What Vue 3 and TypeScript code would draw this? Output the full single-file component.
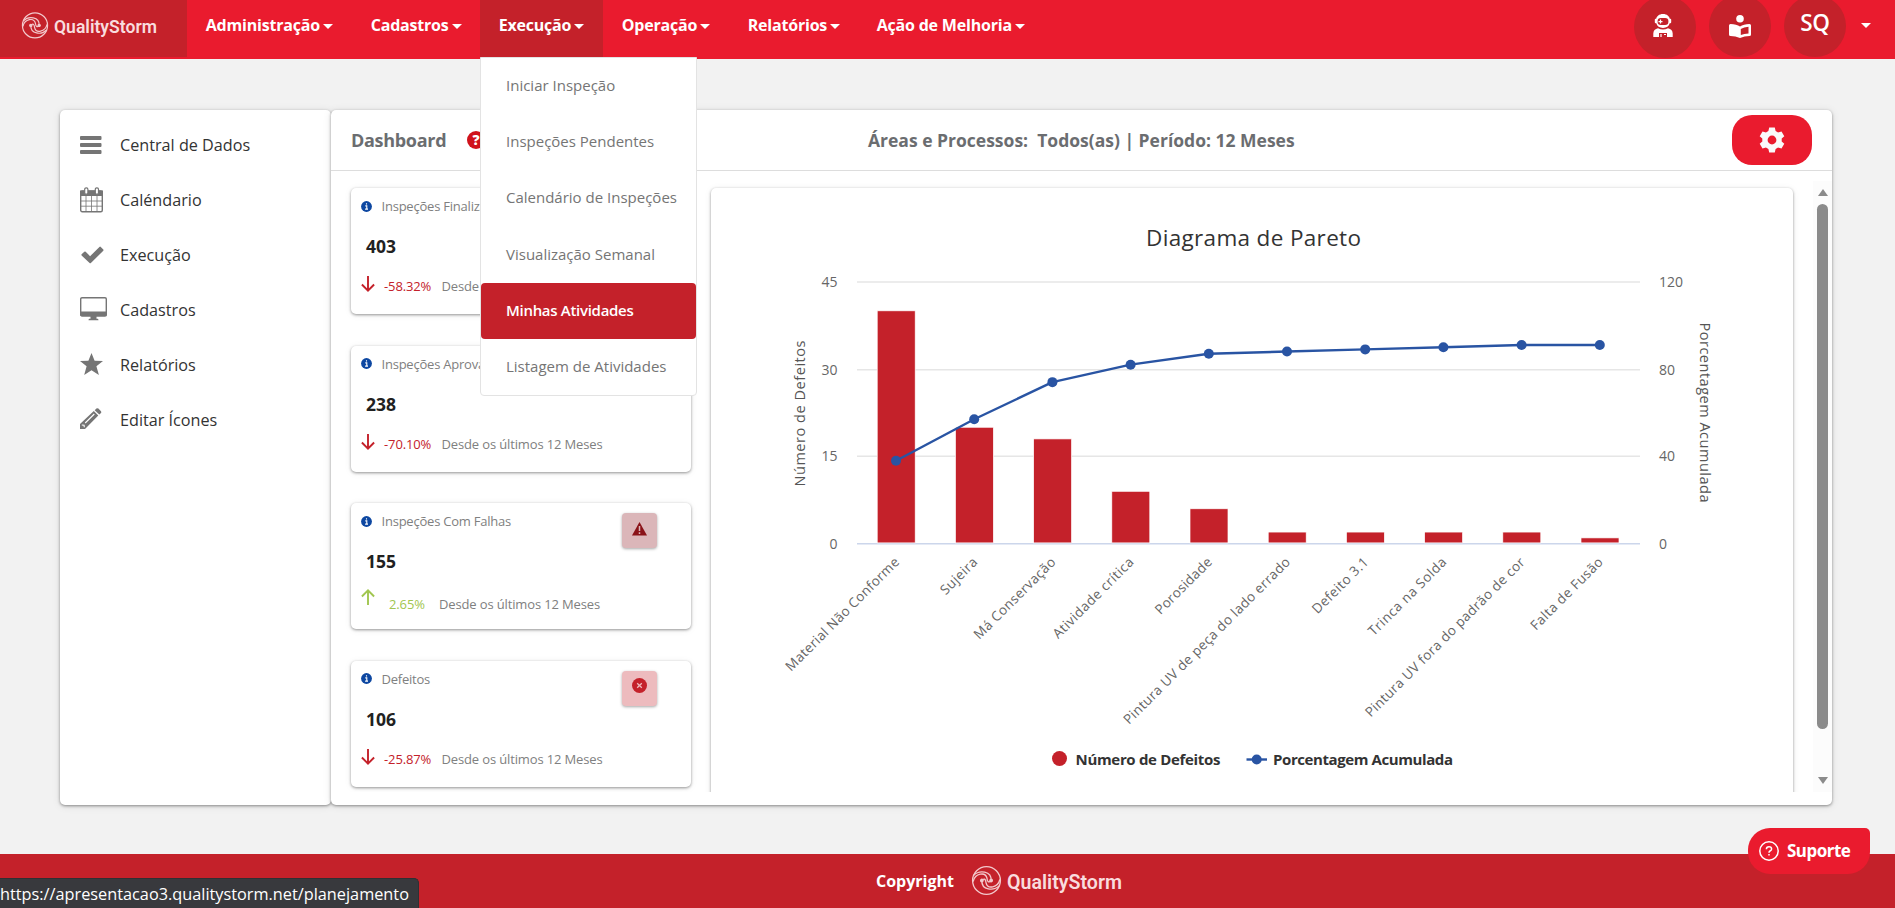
<script setup lang="ts">
interface NavItem { label: string; width: number; active?: boolean }
interface Kpi { title: string; value: string; change: string; up?: boolean; badge?: 'warn' | 'error' }
interface Defect { name: string; count: number; cumulative: number; labelLength: number }

const nav: NavItem[] = [
  { label: 'Administração', width: 165 },
  { label: 'Cadastros', width: 128 },
  { label: 'Execução', width: 123, active: true },
  { label: 'Operação', width: 126 },
  { label: 'Relatórios', width: 129 },
  { label: 'Ação de Melhoria', width: 186 },
]

const menu: string[] = [
  'Iniciar Inspeção',
  'Inspeções Pendentes',
  'Calendário de Inspeções',
  'Visualização Semanal',
  'Minhas Atividades',
  'Listagem de Atividades',
]
const activeMenu = 'Minhas Atividades'

const kpis: Kpi[] = [
  { title: 'Inspeções Finalizadas', value: '403', change: '-58.32%' },
  { title: 'Inspeções Aprovadas', value: '238', change: '-70.10%' },
  { title: 'Inspeções Com Falhas', value: '155', change: '2.65%', up: true, badge: 'warn' },
  { title: 'Defeitos', value: '106', change: '-25.87%', badge: 'error' },
]

const defects: Defect[] = [
  { name: 'Material Não Conforme', count: 40, cumulative: 38, labelLength: 154 },
  { name: 'Sujeira', count: 20, cumulative: 57, labelLength: 46 },
  { name: 'Má Conservação', count: 18, cumulative: 74, labelLength: 109 },
  { name: 'Atividade crítica', count: 9, cumulative: 82, labelLength: 108 },
  { name: 'Porosidade', count: 6, cumulative: 87, labelLength: 74 },
  { name: 'Pintura UV de peça do lado errado', count: 2, cumulative: 88, labelLength: 229 },
  { name: 'Defeito 3.1', count: 2, cumulative: 89, labelLength: 73 },
  { name: 'Trinca na Solda', count: 2, cumulative: 90, labelLength: 104 },
  { name: 'Pintura UV fora do padrão de cor', count: 2, cumulative: 91, labelLength: 219 },
  { name: 'Falta de Fusão', count: 1, cumulative: 91, labelLength: 96 },
]

const base = 543.7
const plotHeight = 262
const centerX = (i: number): number => 896 + i * 78.2
const barY = (v: number): number => base - (v / 45) * plotHeight
const lineY = (v: number): number => base - (v / 120) * plotHeight
const points = defects.map((d, i) => `${centerX(i)},${lineY(d.cumulative)}`).join(' ')
const ticks = [
  { left: '45', right: '120', y: 282 },
  { left: '30', right: '80', y: 369.8 },
  { left: '15', right: '40', y: 456.3 },
  { left: '0', right: '0', y: 543.7 },
]
</script>

<template>
  <div class="page">
    <header class="topbar">
      <div class="brand">
        <svg class="logo" width="142" height="32" viewBox="0 0 142 32">
          <g transform="translate(15 15.400) scale(.93)" fill="none" stroke="#f3c9cc" stroke-width="1.300">
            <circle r="13.500" />
            <path d="M-12.500-5C-7-10.500 5-9.500 4.500 0M12.500 5C7 10.500-5 9.500-4.500 0" />
            <path d="M-13 1C-11-7-1-9 .5-2 .8 1.500 2.500 2.500 4.500 0M13-1C11 7 1 9-.5 2-.8-1.500-2.500-2.500-4.500 0" />
            <circle cx="-4.500" r="1.200" fill="#f3c9cc" /><circle cx="4.500" r="1.200" fill="#f3c9cc" />
          </g>
          <text class="logo-text" x="34" y="23" textLength="103" lengthAdjust="spacingAndGlyphs">QualityStorm</text>
        </svg>
      </div>
      <nav class="nav">
        <a v-for="item in nav" :key="item.label" class="nav-item" :class="{ active: item.active }" :style="{ width: item.width + 'px' }">
          <span>{{ item.label }}</span><i class="caret"></i>
        </a>
      </nav>
      <div class="account">
        <span class="round low">
          <svg width="20" height="24" viewBox="0 0 20 24">
            <path fill="#fff" d="M10 0c4 0 6.300 2.300 6.800 4.800h.6q.8 0 .8.900v2.600q0 .9-.9.900h-.6C16 12 13.500 13.900 10 13.900S4 12 3.300 9.200h-.6q-.9 0-.9-.9V5.700q0-.9.8-.9h.6C3.700 2.300 6 0 10 0zM.3 23v-3.500Q.5 15 5 14.200q5 2.600 10 0 4.500.8 4.700 5.300V23z" />
            <rect x="4.600" y="4" width="10.800" height="7" rx="3.300" fill="#c4212a" />
            <path d="M7.500 5.600v4M5.500 7.600h4" stroke="#fff" stroke-width="1.200" />
            <path d="M6 23v-4h8v4" fill="#c4212a" /><path d="M8 20v3M11 20.500h2" stroke="#fff" stroke-width="1.200" />
          </svg>
        </span>
        <span class="round">
          <svg width="22" height="23" viewBox="0 0 22 23">
            <circle cx="11" cy="3.800" r="3.800" fill="#fff" />
            <path fill="#fff" d="M0 10.500Q0 9 1.500 9 7.500 9 11 11.500 14.500 9 20.500 9 22 9 22 10.500v9q0 1.500-1.500 1.600-5 .2-9.500 1.900-4.500-1.700-9.500-1.900Q0 21 0 19.500z" />
            <path fill="#c4212a" d="M11.800 14q3-2 7.700-2.200v6.600q-4.500.3-7.700 1.700z" />
          </svg>
        </span>
        <span class="round initials">SQ</span>
        <i class="caret"></i>
      </div>
    </header>

    <ul class="dropdown">
      <li v-for="entry in menu" :key="entry" :class="{ selected: entry === activeMenu }">{{ entry }}</li>
    </ul>

    <main class="content">
      <aside class="sidebar">
        <a class="side-item">
          <svg width="27" height="26" viewBox="0 0 27 26"><path fill="#757575" d="M1 4h19.500q1 0 1 1v2q0 1-1 1H1q-1 0-1-1V5q0-1 1-1zm0 7h19.500q1 0 1 1v2q0 1-1 1H1q-1 0-1-1v-2q0-1 1-1zm0 7h19.500q1 0 1 1v2q0 1-1 1H1q-1 0-1-1v-2q0-1 1-1z" /></svg>
          Central de Dados
        </a>
        <a class="side-item">
          <svg width="27" height="26" viewBox="0 0 27 26">
            <rect x=".7" y="4" width="21.600" height="20.800" rx="1.500" fill="#fff" stroke="#757575" stroke-width="1.400" />
            <path d="M0 3.500h23v5.500H0z" fill="#757575" />
            <path d="M6 9v16M11.500 9v16M17 9v16M1 14h21M1 19.200h21" stroke="#757575" stroke-width=".8" />
            <rect x="4.700" y=".8" width="3.200" height="6.400" rx="1.500" fill="#fff" stroke="#757575" stroke-width="1.200" />
            <rect x="15.300" y=".8" width="3.200" height="6.400" rx="1.500" fill="#fff" stroke="#757575" stroke-width="1.200" />
          </svg>
          Caléndario
        </a>
        <a class="side-item">
          <svg width="27" height="26" viewBox="0 0 27 26"><path fill="#757575" d="M1.600 12.200 4.300 9.800q.7-.6 1.400 0l4.400 4.400L19.400 4.900q.7-.6 1.400 0l2.500 2.600q.5.600 0 1.200L10.900 21q-.7.600-1.300 0L1.600 13.400q-.5-.6 0-1.200z" /></svg>
          Execução
        </a>
        <a class="side-item">
          <svg width="27" height="26" viewBox="0 0 27 26">
            <rect x=".7" y=".7" width="25.600" height="18.300" rx="1.300" fill="none" stroke="#757575" stroke-width="1.400" />
            <path d="M.5 14.500h26V19H.5zM10.500 18.500h6v3.200h1.200q.8.400.8 1.500h-10q0-1.100.8-1.500h1.200z" fill="#757575" />
          </svg>
          Cadastros
        </a>
        <a class="side-item">
          <svg width="27" height="26" viewBox="0 0 27 26"><path fill="#757575" d="m11.500 1 3.100 7.700 8.400.4-6.600 5.200 2.500 8.700-7.400-4.700L4.200 23l2.400-8.700L0 9.100l8.400-.4z" /></svg>
          Relatórios
        </a>
        <a class="side-item">
          <svg width="27" height="26" viewBox="0 0 27 26">
            <path fill="#757575" d="m14.700 3.200 1.700-1.600q1-.8 2 0l2.600 2.600q.7.900 0 1.800l-1.700 1.600zM13.800 4.100l4.500 4.500L6 21l-1 1H0v-5z" />
            <path d="M5.200 16 14.300 7M1.800 18l2.300.2.200 2.100" stroke="#fff" stroke-width="1.100" fill="none" />
          </svg>
          Editar Ícones
        </a>
      </aside>

      <section class="board">
        <div class="board-head">
          <h1>Dashboard</h1>
          <span class="help">?</span>
          <p class="filter">Áreas e Processos:&nbsp; Todos(as) | Período: 12 Meses</p>
          <button class="gear">
            <svg width="26" height="26" viewBox="0 0 26 26">
              <path fill="#fafafa" fill-rule="evenodd" d="M10.200.5h5.600l.8 3.500 2.500 1.400 3.400-1 2.800 4.800-2.600 2.400v2.800l2.600 2.400-2.800 4.800-3.400-1-2.500 1.400-.8 3.500h-5.600L9.400 22l-2.500-1.400-3.400 1L.7 16.800l2.600-2.400v-2.800L.7 9.200l2.800-4.800 3.400 1L9.400 4zM13 8.600a4.400 4.400 0 1 0 0 8.800 4.400 4.400 0 0 0 0-8.800z" />
            </svg>
          </button>
        </div>

        <div class="board-body">
          <div class="kpis">
            <article v-for="kpi in kpis" :key="kpi.title" class="kpi">
              <div class="kpi-title">
                <svg width="11" height="11" viewBox="0 0 11 11"><circle cx="5.500" cy="5.500" r="5.400" fill="#0d47a1" /><path d="M4.300 4.900h1.500V8M4.100 8.100h2.900M5.500 2.300v1.300" stroke="#fff" stroke-width="1.100" fill="none" /></svg>
                <span>{{ kpi.title }}</span>
              </div>
              <div class="kpi-value">{{ kpi.value }}</div>
              <div class="kpi-trend" :class="{ up: kpi.up }">
                <svg width="14" height="16" viewBox="0 0 14 16"><path d="M7 0v14.500M.9 8.500 7 14.600l6.100-6.100" fill="none" stroke="currentColor" stroke-width="1.900" /></svg>
                <span class="pct">{{ kpi.change }}</span>
                <span class="since">Desde os últimos 12 Meses</span>
              </div>
              <span v-if="kpi.badge" class="badge" :class="kpi.badge">
                <svg v-if="kpi.badge === 'warn'" width="15" height="14" viewBox="0 0 15 14"><path d="M7.500 0 15 13.500H0z" fill="#8a1218" /><path d="M7.500 4v5M7.500 10.300v1.700" stroke="#dbb6b9" stroke-width="1.500" /></svg>
                <svg v-else width="15" height="15" viewBox="0 0 15 15"><circle cx="7.500" cy="7.500" r="7.500" fill="#c4212a" /><path d="m5.200 5.200 4.600 4.600m0-4.600L5.200 9.800" stroke="#edbbbe" stroke-width="1.300" /></svg>
              </span>
            </article>
          </div>

          <div class="chart-card">
            <svg class="chart" width="1082" height="605" viewBox="711 188 1082 605">
              <text class="chart-title" x="1146" y="245.500" textLength="215">Diagrama de Pareto</text>
              <g v-for="t in ticks" :key="t.y">
                <line x1="857" x2="1640" :y1="t.y" :y2="t.y" :stroke="t.left === '0' ? '#ccd6eb' : '#e6e6e6'" stroke-width="1.500" />
                <text class="tick" x="837.500" :y="t.y + 5" text-anchor="end">{{ t.left }}</text>
                <text class="tick" x="1659" :y="t.y + 5">{{ t.right }}</text>
              </g>
              <rect v-for="(d, i) in defects" :key="'bar' + d.name" :x="centerX(i) - 18.8" :y="barY(d.count)" width="38" :height="base - barY(d.count) - 0.8" fill="#c4212a" stroke="#fff" stroke-width=".7" />
              <polyline :points="points" fill="none" stroke="#2954a3" stroke-width="2.400" stroke-linejoin="round" />
              <circle v-for="(d, i) in defects" :key="'dot' + d.name" :cx="centerX(i)" :cy="lineY(d.cumulative)" r="5" fill="#2954a3" />
              <text v-for="(d, i) in defects" :key="'label' + d.name" class="label" text-anchor="end" :textLength="d.labelLength" :transform="`translate(${centerX(i) + 4} 563) rotate(-45)`">{{ d.name }}</text>
              <text class="axis" transform="translate(804.500 486.500) rotate(-90)" textLength="146">Número de Defeitos</text>
              <text class="axis" transform="translate(1699.500 322.500) rotate(90)" textLength="180">Porcentagem Acumulada</text>
              <circle cx="1059.500" cy="758.500" r="7.500" fill="#c4212a" />
              <text class="legend" x="1075.500" y="764.500" textLength="145">Número de Defeitos</text>
              <line x1="1246.500" x2="1267" y1="759.500" y2="759.500" stroke="#2954a3" stroke-width="2.400" />
              <circle cx="1256.700" cy="759.500" r="5" fill="#2954a3" />
              <text class="legend" x="1273" y="764.500" textLength="180">Porcentagem Acumulada</text>
            </svg>
          </div>

          <div class="scrollbar">
            <i class="arrow-up"></i>
            <i class="thumb"></i>
            <i class="arrow-down"></i>
          </div>
        </div>
      </section>
    </main>

    <footer class="footer">
      <span>Copyright</span>
      <svg class="logo" width="156" height="38" viewBox="0 -2 156 38">
        <g transform="translate(15.500 16.500) scale(1.030)" fill="none" stroke="#f3c9cc" stroke-width="1.300">
          <circle r="13.500" />
          <path d="M-12.500-5C-7-10.500 5-9.500 4.500 0M12.500 5C7 10.500-5 9.500-4.500 0" />
          <path d="M-13 1C-11-7-1-9 .5-2 .8 1.500 2.500 2.500 4.500 0M13-1C11 7 1 9-.5 2-.8-1.500-2.500-2.500-4.500 0" />
          <circle cx="-4.500" r="1.200" fill="#f3c9cc" /><circle cx="4.500" r="1.200" fill="#f3c9cc" />
        </g>
        <text class="logo-text footer-logo" x="36" y="25" textLength="115" lengthAdjust="spacingAndGlyphs">QualityStorm</text>
      </svg>
    </footer>

    <button class="support">
      <svg width="20" height="20" viewBox="0 0 20 20">
        <circle cx="10" cy="10" r="9.200" fill="none" stroke="#fff" stroke-width="1.500" />
        <path d="M7.400 8.200Q7.400 5.700 10 5.700t2.600 2.200Q12.600 9.200 11 10q-1 .6-1 1.800M10 13v1.600" fill="none" stroke="#fff" stroke-width="1.500" />
      </svg>
      Suporte
    </button>

    <div class="status">https://apresentacao3.qualitystorm.net/planejamento</div>
  </div>
</template>

<style>
html,
body {
  margin: 0;
  overflow: hidden;
}
</style>

<style scoped>
.page {
  position: relative;
  display: flex;
  flex-direction: column;
  width: 1895px;
  height: 908px;
  overflow: hidden;
  background: #f2f2f2;
  font-family: "Open Sans", "Noto Sans", sans-serif;
}
.page * {
  box-sizing: border-box;
}
.topbar {
  display: flex;
  height: 59px;
  flex: none;
  background: #ea1b2e;
}
.brand {
  width: 187px;
  height: 57px;
  padding: 10px 0 0 20px;
  background: #c4212a;
}
.logo {
  overflow: visible;
}
.logo-text {
  font: 600 18.500px Roboto, sans-serif;
  fill: #f9dcde;
}
.footer-logo {
  font-size: 20.500px;
}
.nav {
  display: flex;
  height: 57px;
}
.nav-item {
  display: flex;
  align-items: center;
  gap: 3px;
  padding: 0 0 8px 18.700px;
  color: #fff;
  font-size: 16px;
  font-weight: 700;
  letter-spacing: -0.2px;
  white-space: nowrap;
}
.nav-item.active {
  background: #c4212a;
}
.caret {
  width: 0;
  border: 5px solid transparent;
  border-top-color: #fff;
  border-bottom: 0;
  margin-top: 3px;
}
.account {
  display: flex;
  gap: 13px;
  margin-left: auto;
  padding-right: 24px;
}
.account > .caret {
  margin: 23px 0 0 2px;
}
.round {
  display: flex;
  width: 62px;
  height: 62px;
  margin-top: -5px;
  align-items: center;
  justify-content: center;
  border-radius: 50%;
  background: #c4212a;
}
.round.low {
  margin-top: -4px;
  padding: 0 4px 2px 0;
}
.initials {
  padding-bottom: 7px;
  color: #fff;
  font-size: 22.500px;
  font-weight: 600;
  letter-spacing: -0.3px;
}
.dropdown {
  position: absolute;
  z-index: 5;
  top: 57px;
  left: 480px;
  width: 217px;
  height: 339px;
  margin: 0;
  padding: 0;
  border: 1px solid #e3e3e3;
  border-radius: 0 0 4px 4px;
  background: #fff;
  list-style: none;
}
.dropdown li {
  height: 56.200px;
  padding-left: 25px;
  border-radius: 4px;
  color: #757575;
  font-size: 15px;
  line-height: 54px;
  white-space: nowrap;
}
.dropdown li.selected {
  background: #c4212a;
  color: #fff;
  font-weight: 600;
  letter-spacing: -0.3px;
}
.content {
  display: flex;
  padding: 51px 63px 0 60px;
}
.sidebar,
.board {
  height: 694.500px;
  border-radius: 5px;
  background: #fff;
  box-shadow: 0 1px 3px rgba(0, 0, 0, 0.4), 0 1px 9px rgba(0, 0, 0, 0.1);
}
.sidebar {
  width: 270.500px;
  margin-right: 0.500px;
  padding: 7px 0 0 20px;
}
.side-item {
  display: flex;
  height: 55px;
  align-items: center;
  gap: 13px;
  color: #333;
  font-size: 16.200px;
}
.board {
  flex: 1;
}
.board-head {
  display: flex;
  height: 61px;
  align-items: center;
  padding: 0 20px;
  border-bottom: 1px solid #ddd;
  color: #6b6d70;
}
h1,
p {
  margin: 0;
  font-size: 18px;
  font-weight: 700;
}
h1 {
  width: 116px;
  letter-spacing: -0.3px;
}
.help {
  width: 18px;
  height: 18px;
  border-radius: 50%;
  background: #d0121b;
  color: #fff;
  font-size: 14px;
  font-weight: 800;
  line-height: 18px;
  text-align: center;
}
.filter {
  width: 430px;
  margin-left: 383px;
  font-size: 17.500px;
  white-space: nowrap;
}
.gear {
  display: flex;
  width: 80px;
  height: 50px;
  align-items: center;
  justify-content: center;
  margin-left: auto;
  padding: 0;
  border: 0;
  border-radius: 20px;
  background: #ea1b2e;
}
.board-body {
  display: flex;
  height: 621px;
  overflow: hidden;
  padding: 17px 0 0 20px;
}
.kpis {
  display: flex;
  width: 340px;
  flex-direction: column;
  gap: 31.500px;
}
.kpi,
.chart-card {
  border-radius: 5px;
  background: #fff;
  box-shadow: 0 1px 3px rgba(0, 0, 0, 0.4), 0 1px 9px rgba(0, 0, 0, 0.06);
}
.kpi {
  position: relative;
  height: 126px;
  flex: none;
  padding: 8px 0 0 10px;
}
.kpi-title {
  display: flex;
  height: 20px;
  align-items: center;
  gap: 9.500px;
  color: #808080;
  font-size: 13px;
  letter-spacing: -0.220px;
}
.kpi-value {
  height: 60px;
  padding-left: 5px;
  color: #212121;
  font-size: 17.500px;
  font-weight: 700;
  line-height: 60px;
}
.kpi-trend {
  display: flex;
  color: #c4212a;
  font-size: 13px;
  line-height: 20px;
}
.pct {
  width: 57.500px;
  margin-left: 9px;
  letter-spacing: -0.120px;
}
.since {
  color: #808080;
  letter-spacing: -0.140px;
}
.kpi-trend.up {
  margin-top: -2px;
  color: #a1c650;
}
.up svg {
  transform: rotate(180deg);
}
.up span {
  padding-top: 5px;
}
.up .pct {
  width: 50px;
  margin-left: 14px;
}
.badge {
  position: absolute;
  top: 10px;
  right: 34px;
  display: flex;
  width: 35px;
  height: 35px;
  justify-content: center;
  padding-top: 9px;
  border-radius: 4px;
  box-shadow: 0 1px 3px rgba(0, 0, 0, 0.35);
}
.badge.warn {
  background: #dbb6b9;
}
.badge.error {
  padding-top: 7px;
  background: #edbbbe;
}
.chart-card {
  width: 1082px;
  height: 640px;
  flex: none;
  margin-left: 20px;
}
.chart {
  display: block;
}
.chart-title {
  fill: #333;
  font-family: "Open Sans", sans-serif;
  font-size: 22.500px;
}
.tick {
  fill: #666;
  font-size: 14px;
}
.label {
  fill: #666;
  font-size: 13.500px;
}
.axis {
  fill: #555;
  font-size: 14.500px;
  font-weight: 500;
}
.legend {
  fill: #333;
  font-size: 15px;
  font-weight: 700;
}
.scrollbar {
  display: flex;
  width: 19px;
  height: 611px;
  flex-direction: column;
  align-items: center;
  margin: -7px 0 0 auto;
  background: #fcfcfc;
}
.arrow-up {
  width: 0;
  margin-top: 8px;
  border: 5px solid transparent;
  border-top: 0;
  border-bottom: 7px solid #8b8b8b;
}
.thumb {
  width: 11px;
  height: 525px;
  margin-top: 8px;
  border-radius: 6px;
  background: #8b8b8b;
}
.arrow-down {
  width: 0;
  margin-top: 48px;
  border: 5px solid transparent;
  border-top: 7px solid #8b8b8b;
  border-bottom: 0;
}
.footer {
  display: flex;
  height: 54px;
  align-items: center;
  gap: 17px;
  margin-top: auto;
  padding-left: 876px;
  background: #c4212a;
  color: #fff;
  font-size: 16px;
  font-weight: 700;
}
.support {
  position: absolute;
  z-index: 6;
  top: 828px;
  left: 1748px;
  display: flex;
  width: 122px;
  height: 46px;
  align-items: center;
  gap: 8px;
  padding: 0 0 1px 11px;
  border: 0;
  border-radius: 22px 5px 22px 22px;
  background: #ea1b2e;
  color: #fff;
  font: 700 17px "Noto Sans", "Open Sans", sans-serif;
  letter-spacing: -0.5px;
}
.status {
  position: absolute;
  z-index: 6;
  bottom: 0;
  left: 0;
  width: 419px;
  height: 30px;
  border: 1px solid #2f3033;
  border-width: 1px 1px 0 0;
  border-radius: 0 5px 0 0;
  background: #38393d;
  color: #fff;
  font-size: 16.300px;
  line-height: 31px;
  white-space: nowrap;
}
</style>
